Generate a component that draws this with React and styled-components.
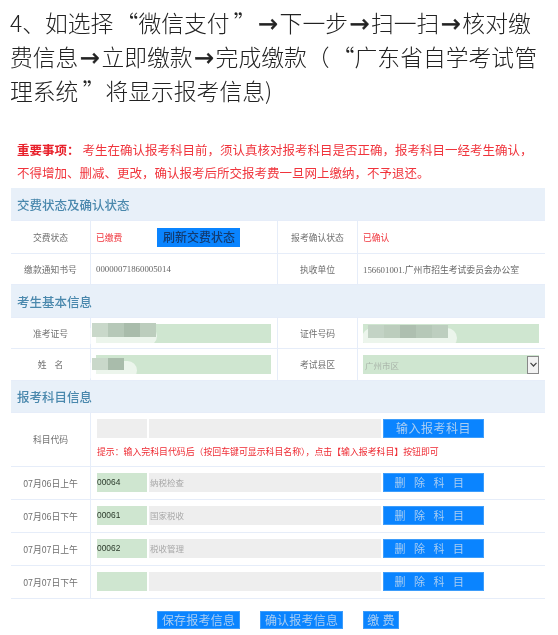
import React from "react";
import styled, { createGlobalStyle } from "styled-components";

const cjk = `"Noto Sans CJK SC", "Liberation Sans", sans-serif`;

const GlobalStyle = createGlobalStyle`
  html, body {
    margin: 0;
    height: 635px;
    overflow: hidden;
    background: #fff;
  }
`;

const Page = styled.div`
  width: 558px;
  font-family: ${cjk};
`;

const Intro = styled.p`
  margin: 0;
  padding: 6px 0 0 10px;
  width: 540px;
  height: 102px;
  font-size: 22.8px;
  line-height: 34px;
  font-weight: 300;
  color: #222;
  filter: blur(0.4px);
`;

const OpenQuote = styled.span`
  display: inline-block;
  width: 25px;
  line-height: 1;
  text-align: right;
`;

const CloseQuote = styled.span`
  display: inline-block;
  width: 27px;
  line-height: 1;
  text-align: left;
  padding-left: 4px;
  box-sizing: border-box;
`;

const Arrow = styled.span`
  font-family: "DejaVu Sans", sans-serif;
  font-size: 24px;
  font-weight: 400;
  display: inline-block;
  width: 23px;
  line-height: 1;
  text-align: center;
  -webkit-text-stroke: 0.4px #222;
`;

const Notice = styled.div`
  margin: 30px 0 0 17px;
  width: 525px;
  font-size: 12.5px;
  line-height: 23px;
  color: #f0343c;
  filter: blur(0.6px);
  strong {
    margin-right: 3px;
    font-weight: 700;
    color: #e8202a;
  }
`;

const Sheet = styled.div`
  margin: 4px 0 0 11px;
  width: 534px;
  background: #e6edf9;
  border-radius: 2px 2px 0 0;
  filter: blur(0.6px);
`;

const SectionHead = styled.div`
  height: ${(p) => p.$height || 32}px;
  margin-bottom: 1px;
  padding-left: 6px;
  display: flex;
  align-items: center;
  background: #e8f0f9;
  color: #4a88ad;
  font-size: 12.5px;
  font-weight: 500;
`;

const Row = styled.div`
  display: grid;
  grid-template-columns: ${(p) => (p.$wide ? "79px 1fr" : "79px 186px 79px 1fr")};
  gap: 1px;
  margin-bottom: 1px;
  height: ${(p) => p.$height || 32}px;
`;

const Label = styled.div`
  background: #fff;
  display: flex;
  align-items: center;
  justify-content: center;
  font-size: 8.8px;
  color: #6f6f6f;
  white-space: pre;
`;

const Cell = styled.div`
  position: relative;
  background: #fff;
  display: flex;
  align-items: center;
  padding: 0 6px 0 5px;
  font-family: "Liberation Serif", "Noto Sans CJK SC", serif;
  font-size: 8.8px;
  color: ${(p) => (p.$red ? "#f0343c" : "#666")};
`;

const RefreshButton = styled.div`
  margin-left: 35px;
  width: 83px;
  height: 19px;
  display: flex;
  align-items: center;
  justify-content: center;
  background: #0a84ff;
  color: #123a70;
  font-family: ${cjk};
  font-size: 12px;
  font-weight: 500;
  line-height: 1;
`;

const GreenField = styled.div`
  flex: 1;
  height: 19px;
  display: flex;
  align-items: center;
  padding-left: 2px;
  background: #cfe6d0;
  color: #aab5aa;
  font-family: ${cjk};
  font-size: 8.5px;
`;

const SelectArrow = styled.div`
  margin-left: auto;
  width: 12px;
  height: 18px;
  display: flex;
  align-items: center;
  justify-content: center;
  background: #f2f2f2;
  border: 1px solid #888;
  box-sizing: border-box;
`;

const Mosaic = styled.div`
  position: absolute;
  left: ${(p) => p.$left}px;
  top: ${(p) => p.$top}px;
  display: flex;
  filter: blur(0.6px);
  &::after {
    content: "";
    position: absolute;
    left: -6px;
    right: ${(p) => p.$tail || 0}px;
    top: 3px;
    height: ${(p) => p.$halo || 20}px;
    background: rgba(255, 255, 255, 0.6);
    border-radius: 10px;
    z-index: -1;
  }
`;

const Tile = styled.span`
  width: 16px;
  height: ${(p) => p.$h || 14}px;
  background: ${(p) => p.$c};
`;

const SubjectCell = styled.div`
  background: #fff;
  padding: 5px 0 0 6px;
`;

const SubjectLine = styled.div`
  display: flex;
  gap: 2px;
  align-items: center;
  height: 20px;
`;

const CodeInput = styled.div`
  width: 50px;
  height: 19px;
  display: flex;
  align-items: center;
  background: ${(p) => (p.$gray ? "#eeeeee" : "#cfe6d0")};
  color: #2b3a2b;
  font-family: "Liberation Sans", sans-serif;
  font-size: 8.4px;
`;

const NameInput = styled.div`
  width: 232px;
  height: 19px;
  display: flex;
  align-items: center;
  padding-left: 1px;
  box-sizing: border-box;
  background: #eeeeee;
  color: #a8a8a8;
  font-size: 8.5px;
`;

const BlueButton = styled.div`
  width: 101px;
  height: 19px;
  box-sizing: border-box;
  display: flex;
  align-items: center;
  justify-content: center;
  background: #0a84ff;
  border: 1px solid #3d9dfb;
  color: #a9cdf2;
  font-size: ${(p) => p.$size || 12}px;
  line-height: 1;
  letter-spacing: ${(p) => p.$spread || 0}px;
`;

const Hint = styled.div`
  margin-top: 3px;
  font-size: 8.9px;
  line-height: 22px;
  color: #ee2a32;
  white-space: nowrap;
`;

const Actions = styled.div`
  background: #fff;
  height: 21px;
  padding-top: 12px;
  display: flex;
  justify-content: center;
  gap: 20px;
`;

const ActionButton = styled.div`
  width: ${(p) => p.$width || 83}px;
  height: 18px;
  box-sizing: border-box;
  display: flex;
  align-items: center;
  justify-content: center;
  background: #0a84ff;
  border: 1px solid #3d9dfb;
  color: #a9cdf2;
  font-size: 12px;
  line-height: 1;
  letter-spacing: 0.2px;
`;

const subjects = [
  { time: "07月06日上午", code: "00064", name: "纳税检查" },
  { time: "07月06日下午", code: "00061", name: "国家税收" },
  { time: "07月07日上午", code: "00062", name: "税收管理" },
  { time: "07月07日下午", code: "", name: "" },
];

const blot = ["#c9d8ca", "#b6c8b8", "#a9bcab", "#bccdbd"];
const blot2 = ["#c3d3c5", "#bccdbd", "#aebfb0", "#b6c8b8", "#bdcebf"];

const App = () => {
  return (
    <Page>
      <GlobalStyle />
      <Intro>
        4、如选择<OpenQuote>“</OpenQuote>微信支付<CloseQuote>”</CloseQuote>
        <Arrow>→</Arrow>下一步<Arrow>→</Arrow>扫一扫<Arrow>→</Arrow>核对缴费信息
        <Arrow>→</Arrow>立即缴款<Arrow>→</Arrow>完成缴款（<OpenQuote>“</OpenQuote>广东省自学考试管理系统
        <CloseQuote>”</CloseQuote>将显示报考信息)
      </Intro>
      <Notice>
        <strong>重要事项：</strong>考生在确认报考科目前，须认真核对报考科目是否正确，报考科目一经考生确认，
        不得增加、删减、更改，确认报考后所交报考费一旦网上缴纳，不予退还。
      </Notice>
      <Sheet>
        <SectionHead>交费状态及确认状态</SectionHead>
        <Row>
          <Label>交费状态</Label>
          <Cell $red>
            已缴费
            <RefreshButton>刷新交费状态</RefreshButton>
          </Cell>
          <Label>报考确认状态</Label>
          <Cell $red>已确认</Cell>
        </Row>
        <Row $height={30}>
          <Label>缴款通知书号</Label>
          <Cell>00000071860005014</Cell>
          <Label>执收单位</Label>
          <Cell>156601001.广州市招生考试委员会办公室</Cell>
        </Row>
        <SectionHead>考生基本信息</SectionHead>
        <Row $height={30}>
          <Label>准考证号</Label>
          <Cell>
            <GreenField />
            <Mosaic $left={1} $top={5} $tail={-1}>
              {blot.map((c) => (
                <Tile key={c} $c={c} />
              ))}
            </Mosaic>
          </Cell>
          <Label>证件号码</Label>
          <Cell>
            <GreenField />
            <Mosaic $left={10} $top={7} $tail={-9}>
              {blot2.map((c) => (
                <Tile key={c} $c={c} $h={13} />
              ))}
            </Mosaic>
          </Cell>
        </Row>
        <Row $height={31}>
          <Label>{"姓    名"}</Label>
          <Cell>
            <GreenField />
            <Mosaic $left={1} $top={9} $tail={-13} $halo={19}>
              <Tile $c="#c9d8ca" $h={12} />
              <Tile $c="#a9bcab" $h={12} />
            </Mosaic>
          </Cell>
          <Label>考试县区</Label>
          <Cell>
            <GreenField>
              广州市区
              <SelectArrow>
                <svg width="7" height="5" viewBox="0 0 7 5">
                  <path d="M0.5 0.8 L3.5 4 L6.5 0.8" fill="none" stroke="#444" strokeWidth="1.2" />
                </svg>
              </SelectArrow>
            </GreenField>
          </Cell>
        </Row>
        <SectionHead $height={31}>报考科目信息</SectionHead>
        <Row $wide $height={53}>
          <Label>科目代码</Label>
          <SubjectCell>
            <SubjectLine>
              <CodeInput $gray />
              <NameInput />
              <BlueButton $spread={0.5}>输入报考科目</BlueButton>
            </SubjectLine>
            <Hint>提示：输入完科目代码后（按回车键可显示科目名称），点击【输入报考科目】按钮即可</Hint>
          </SubjectCell>
        </Row>
        {subjects.map((s) => (
          <Row $wide key={s.time}>
            <Label>{s.time}</Label>
            <SubjectCell>
              <SubjectLine>
                <CodeInput>{s.code}</CodeInput>
                <NameInput>{s.name}</NameInput>
                <BlueButton $size={11} $spread={8.5}>删除科目</BlueButton>
              </SubjectLine>
            </SubjectCell>
          </Row>
        ))}
        <Actions>
          <ActionButton>保存报考信息</ActionButton>
          <ActionButton>确认报考信息</ActionButton>
          <ActionButton $width={36}>缴 费</ActionButton>
        </Actions>
      </Sheet>
    </Page>
  );
};

export default App;
